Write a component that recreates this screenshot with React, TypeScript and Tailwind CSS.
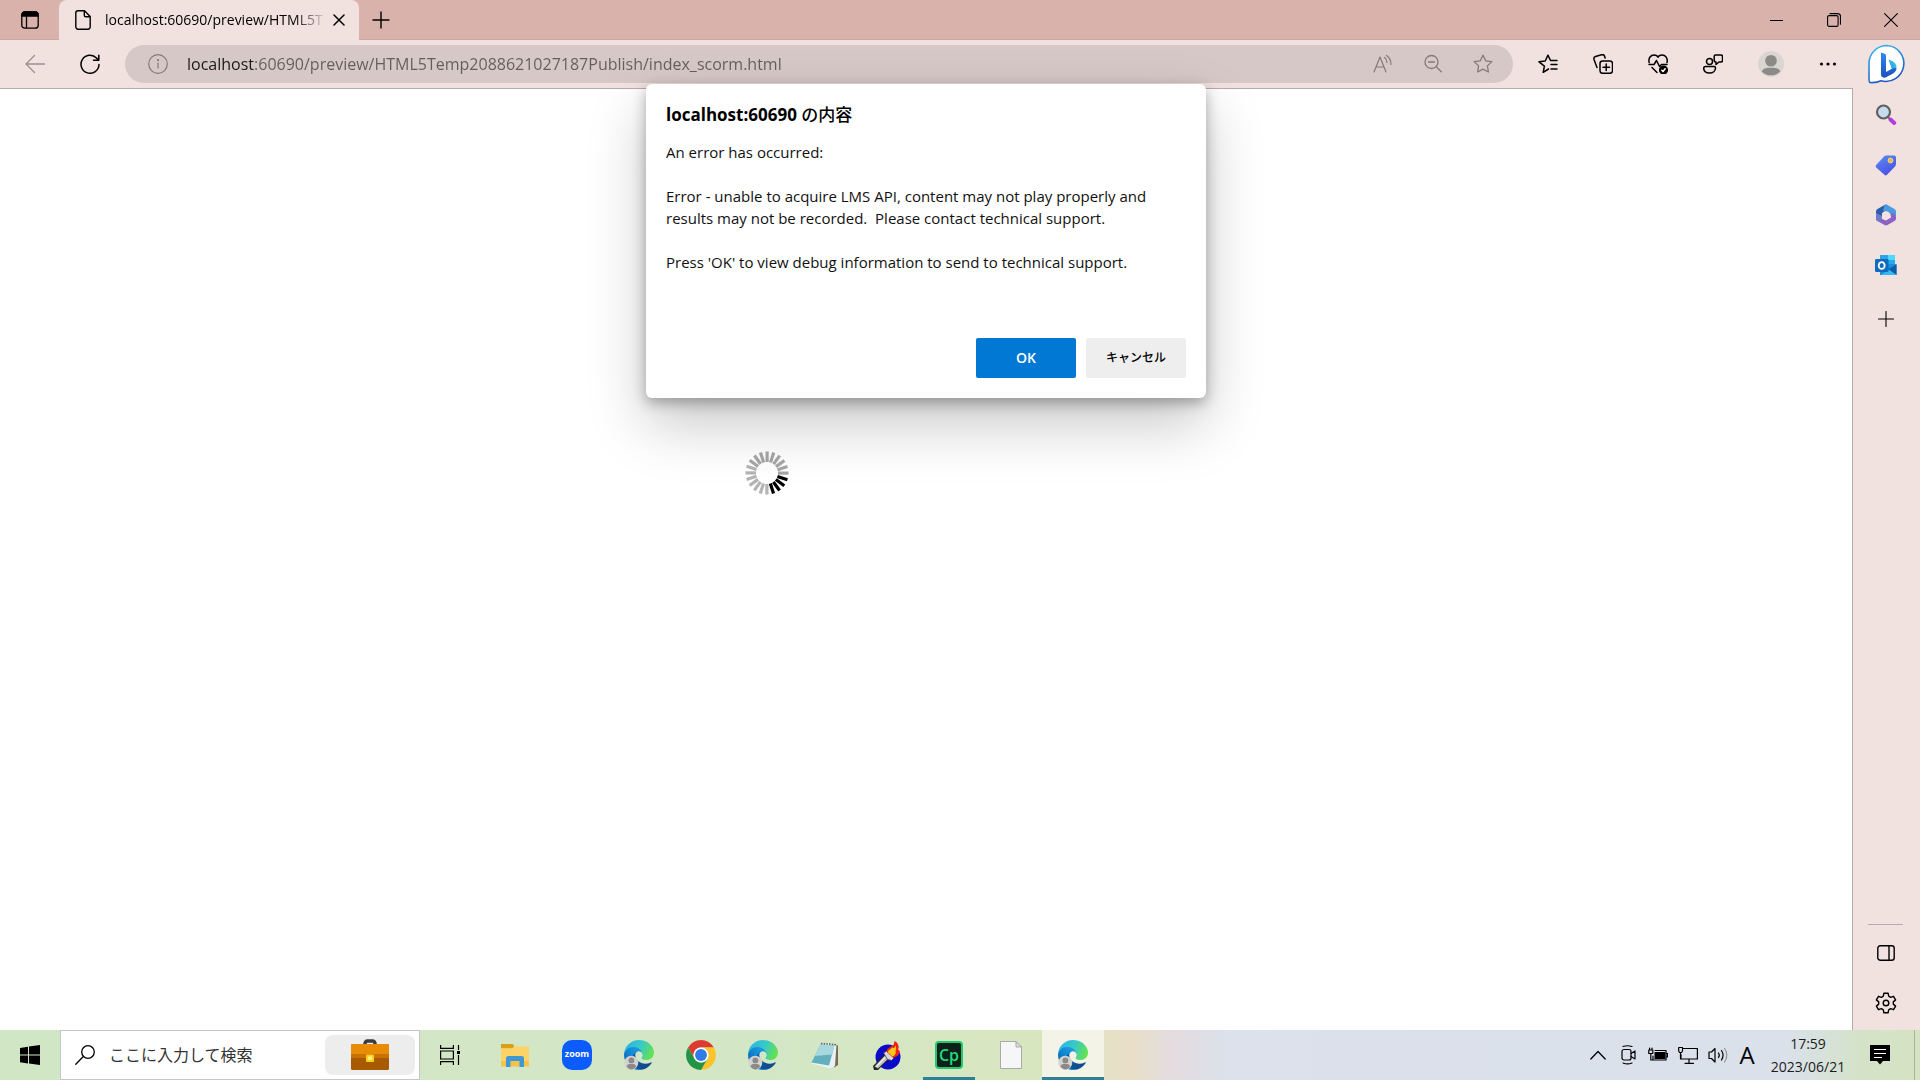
import { useId, type ReactNode } from "react"

type Box = { children: ReactNode; className?: string; box?: string; width?: number }

function Line({ children, className = "size-5", box = "0 0 20 20", width = 1.3 }: Box) {
  return (
    <svg
      viewBox={box}
      fill="none"
      stroke="currentColor"
      strokeWidth={width}
      strokeLinecap="round"
      strokeLinejoin="round"
      className={`shrink-0 ${className}`}
    >
      {children}
    </svg>
  )
}

const STAR = "M10 1.2l2.7 5.6 6.1.8-4.4 4.3 1 6.1-5.4-2.9L4.6 18l1-6.1L1.2 7.6l6.1-.8z"

/* ---------- logos ---------- */

function Bing() {
  const id = useId()
  return (
    <svg viewBox="0 0 38 42" className="h-[42px] w-[38px]">
      <defs>
        <linearGradient id={id + "r"} x1="0" y1="0" x2="0.4" y2="1">
          <stop offset="0" stopColor="#35c0f0" />
          <stop offset="1" stopColor="#2456c4" />
        </linearGradient>
        <linearGradient id={id + "b"} x1="0" y1="0" x2="0" y2="1">
          <stop offset="0" stopColor="#2b8cf0" />
          <stop offset="1" stopColor="#1c4fc0" />
        </linearGradient>
        <linearGradient id={id + "c"} x1="0" y1="1" x2="1" y2="0">
          <stop offset="0" stopColor="#1d5fd0" />
          <stop offset="1" stopColor="#3ddcf2" />
        </linearGradient>
      </defs>
      <path
        d="M19 2.5a18 18 0 1 1-6 35.3c-3 1.5-7 2-11.2 1.7C1 39 1 37 1 34V20.5a18 18 0 0 1 18-18z"
        fill="#fff"
        stroke={`url(#${id}r)`}
        strokeWidth="1.6"
      />
      <path d="M20.5 16.5c4 1.5 8 3 8 7.5 0 3-1.5 5-3.5 6.2L18 33l6-6.5z" fill={`url(#${id}c)`} />
      <path d="M13 9.5l3.5 1.2c1.100.4 1.500 1 1.500 2.200V29l6.500-3.500c2-1 3.800-.5 4 .5-.5 2-2 3.500-3.500 4.400l-6.500 3.700c-1.500.8-3 .7-4.200 0-1-.7-1.300-1.500-1.300-3z" fill={`url(#${id}b)`} />
    </svg>
  )
}

function Edge() {
  const id = useId()
  return (
    <svg viewBox="0 0 256 256" className="size-[30px]">
      <defs>
        <linearGradient id={id + "a"} x1="0.2" y1="0" x2="1" y2="0.3">
          <stop offset="0" stopColor="#0c59a4" />
          <stop offset="1" stopColor="#114a8b" />
        </linearGradient>
        <linearGradient id={id + "b"} x1="1" y1="0.3" x2="0.2" y2="1">
          <stop offset="0" stopColor="#1b9de2" />
          <stop offset="0.5" stopColor="#1288d4" />
          <stop offset="1" stopColor="#0a5ea8" />
        </linearGradient>
        <linearGradient id={id + "c"} x1="0" y1="0.3" x2="1" y2="0.6">
          <stop offset="0" stopColor="#2ab4e4" />
          <stop offset="0.5" stopColor="#38c9c8" />
          <stop offset="1" stopColor="#66e34a" />
        </linearGradient>
      </defs>
      <path fill={`url(#${id}a)`} d="M231 190.500c-3.400 1.800-6.900 3.400-10.500 4.700a101.700 101.700 0 01-35.900 6.500c-47.300 0-88.500-32.500-88.500-74.300 0-11.400 6.200-21.900 16.300-27.300-42.800 1.800-53.800 46.400-53.800 72.500 0 74 68.100 81.400 82.800 81.400 7.900 0 19.800-2.300 27-4.600l1.300-.4a128.300 128.300 0 0066.600-52.800 4 4 0 00-5.300-5.700z" />
      <path fill={`url(#${id}b)`} d="M105.700 241.400a79.200 79.200 0 01-22.700-21.300 80.700 80.700 0 0129.500-120c3.200-1.500 8.500-4.100 15.600-4a32.400 32.400 0 0125.700 13 31.900 31.900 0 016.300 18.700c0-.2 24.500-79.600-80-79.600-43.900 0-80 41.600-80 78.200a130.200 130.200 0 0012.100 56 128 128 0 00156.400 67 75.500 75.500 0 01-62.800-8z" />
      <path fill={`url(#${id}c)`} d="M152.300 148.900c-.8 1-3.300 2.500-3.300 5.700 0 2.600 1.700 5.100 4.700 7.200 14.400 10 41.500 8.700 41.600 8.700 10.700 0 21.100-3 30.300-8.400a61.400 61.400 0 0030.400-52.900c.3-22.400-8-37.300-11.300-43.900C223.500 23.900 177.700 0 128 0A128 128 0 000 126.200c.5-36.500 36.800-66 80-66 3.500 0 23.500.3 42 10a72.600 72.600 0 0130.900 29.300c6.100 10.600 7.200 24.100 7.200 29.500 0 5.400-2.700 13.300-7.800 19.900z" />
      <circle cx="62" cy="194" r="60" fill="#d3d3d1" />
      <circle cx="63" cy="174" r="25" fill="#8c8a88" />
      <path fill="#8c8a88" d="M22 224c6-20 20-20 41-20s34 0 40 20c-8 18-24 27-40 27s-33-9-41-27z" />
    </svg>
  )
}

function Chrome() {
  return (
    <svg viewBox="0 0 48 48" className="size-[30px]">
      <path fill="#de3b30" d="M24 12h20.780a24 24 0 0 0-41.560 0L13.600 30A12 12 0 0 1 24 12z" />
      <path fill="#fcc42c" d="M34.390 30L24 48a24 24 0 0 0 20.780-36H24a12 12 0 0 1 10.390 18z" />
      <path fill="#239446" d="M13.610 30L3.220 12A24 24 0 0 0 24 48l10.390-18a12 12 0 0 1-20.780 0z" />
      <circle cx="24" cy="24" r="12" fill="#fff" />
      <circle cx="24" cy="24" r="9.500" fill="#2f7ce8" />
    </svg>
  )
}

function Folder() {
  return (
    <svg viewBox="0 0 28 28" className="size-7">
      <path fill="#d9a013" d="M0 3h11.500l2 2-2 2.500H0z" />
      <path fill="#fbd367" d="M0 7.500h12l2-2h14V25H0z" />
      <path fill="#f6c34a" d="M0 20h28v5.500H0z" />
      <path fill="#3f97d6" d="M7.500 15h13a2.500 2.500 0 0 1 2.500 2.500V26h-4.500v-6h-9v6H5v-8.500A2.500 2.500 0 0 1 7.500 15z" />
    </svg>
  )
}

function Zoom() {
  return (
    <span className="flex size-[30px] items-center justify-center rounded-[10px] bg-[#0b5cff] pb-0.5 text-[9px] font-bold text-white">
      zoom
    </span>
  )
}

function Notepad() {
  return (
    <svg viewBox="0 0 30 30" className="size-[30px]">
      <path fill="#7b6a50" d="M24 4l4 1.500V25l-4 2.500z" />
      <path fill="#e8f1f4" d="M11 3.500l15.500 1.200L25 26l-5 2.500L1.500 23.500z" />
      <path fill="#62b0bd" d="M10.500 4.500L24.500 5.500l-5.500 20L1.500 22.500z" />
      <path fill="#a6d8de" d="M10.500 4.500L24.500 5.500l-2.500 9L5 16z" />
      <path stroke="#5d6668" strokeWidth="1.600" strokeDasharray="1.500 1.200" d="M11 3.500l15 1.200" />
    </svg>
  )
}

function Torch() {
  return (
    <svg viewBox="0 0 30 30" className="size-[30px]">
      <circle cx="16" cy="17" r="12.500" fill="#0a0ac8" />
      <path fill="#222" d="M1 26L14 13l5 4L6 30H2z" />
      <path fill="#bdbdbd" d="M2.500 26.500L14.500 14l3.500 3L6 28.500z" />
      <path fill="#efefef" d="M4 26l10-10.500 1 1L5 27z" />
      <path fill="#d8d8d8" stroke="#333" strokeWidth=".8" d="M11.500 13l3-2 7.500 7-2.500 2.500-4-1z" />
      <path fill="#f02010" d="M15 12c-1-4 3-4 4-6 2 1 3-1 3.500-5 4 2 5 6 3.500 9 2 0 2 2 1 4s-4 3.500-6 3.500z" />
      <path fill="#ffc61a" d="M16 12.500c0-3 3-3 4-5 2 1 3 0 3.500-2 1.500 4 0 5 0 6.500 1 0 0 3-3 4.500z" />
    </svg>
  )
}

function Captivate() {
  return (
    <span className="flex size-7 items-center justify-center rounded-sm border-2 border-[#1fc96f] bg-[#0d2019] text-base font-semibold text-[#1fdc79]">
      Cp
    </span>
  )
}

function BlankFile() {
  return (
    <svg viewBox="0 0 22 28" className="h-7 w-[22px]" stroke="#a3a3a3" strokeWidth=".9">
      <path fill="#f6f6f8" d="M.5.5H16L21.500 6v21.500H.5z" />
      <path fill="#dedee0" d="M16 .5V6h5.500z" />
    </svg>
  )
}

function Briefcase() {
  return (
    <svg viewBox="0 0 38 32" className="h-8 w-[38px]">
      <path fill="none" stroke="#3b3b3f" strokeWidth="3.500" d="M14 7V4.500A2.500 2.500 0 0 1 16.500 2h5A2.500 2.500 0 0 1 24 4.500V7" />
      <rect y="5" width="38" height="26" rx="1.500" fill="#a85a00" />
      <path fill="#e88b06" d="M1.500 5h35A1.500 1.500 0 0 1 38 6.500V19H0V6.500A1.500 1.500 0 0 1 1.500 5z" />
      <path fill="#c97200" d="M0 15h38v4H0z" />
      <rect x="15" y="15.500" width="8" height="7.500" rx="1" fill="#f6d21c" />
      <rect x="17" y="17.500" width="4" height="3.500" fill="#fff07a" />
    </svg>
  )
}

/* ---------- browser ---------- */

function TabStrip() {
  return (
    <header className="flex h-10 items-stretch bg-[#d9b2ac] shadow-[inset_0_-1px_0_#cfa7a2]">
      <button aria-label="Tab actions" className="flex w-[59px] items-center justify-center">
        <svg viewBox="0 0 18 18" className="size-[18px]" fill="none" stroke="#000" strokeWidth="1.300">
          <rect x=".8" y=".8" width="16.400" height="16.400" rx="3" />
          <path fill="#000" d="M1 5V3.500A2.500 2.500 0 0 1 3.500 1h11A2.500 2.500 0 0 1 17 3.500V5z" />
          <path d="M5.500 5v12" />
        </svg>
      </button>
      <div className="flex w-[300px] items-center rounded-t-lg bg-[#f1e2e0] pl-4">
        <svg viewBox="0 0 16 20" className="h-5 w-4" fill="none" stroke="#000" strokeWidth="1.400" strokeLinejoin="round">
          <path d="M3 .8h6.500l5.700 5.700V17a2.200 2.200 0 0 1-2.200 2.200H3A2.200 2.200 0 0 1 .8 17V3A2.200 2.200 0 0 1 3 .8z" />
          <path d="M9.300 1v4.200c0 .9.600 1.500 1.500 1.500H15" />
        </svg>
        <span className="ml-3.5 w-[222px] text-sm whitespace-nowrap text-black [mask-image:linear-gradient(90deg,#000_85%,transparent)]">
          localhost:60690/preview/HTML5T
        </span>
        <button aria-label="Close tab" className="ml-1.5">
          <Line className="size-3" box="0 0 12 12" width={1.5}>
            <path d="M1 1l10 10M11 1L1 11" />
          </Line>
        </button>
      </div>
      <button aria-label="New tab" className="flex w-11 items-center justify-center">
        <Line className="size-[18px]" box="0 0 18 18" width={1.4}>
          <path d="M9 1v16M1 9h16" />
        </Line>
      </button>
      <div className="ml-auto flex pr-px">
        <button aria-label="Minimize" className="flex w-[57px] items-center justify-center">
          <span className="h-px w-[13px] bg-black" />
        </button>
        <button aria-label="Restore" className="flex w-[57px] items-center justify-center">
          <Line className="size-3.5" box="0 0 14 14" width={1.1}>
            <rect x=".6" y="2.600" width="10.500" height="10.800" rx="1.500" />
            <path d="M3 .6h7.500a3 3 0 0 1 3 3v7.500" />
          </Line>
        </button>
        <button aria-label="Close" className="flex w-[57px] items-center justify-center">
          <Line className="size-3.5" box="0 0 14 14" width={1.1}>
            <path d="M.6.6l12.800 12.800M13.400.6L.6 13.400" />
          </Line>
        </button>
      </div>
    </header>
  )
}

function AddressBar() {
  return (
    <div className="flex h-[38px] flex-1 items-center rounded-full bg-[#d5c8c7] pr-5 pl-[23px] text-[#85797a]">
      <button aria-label="Site information">
        <Line width={1.2}>
          <circle cx="10" cy="10" r="9.300" />
          <path d="M10 9v5" />
          <circle cx="10" cy="6.200" r=".5" fill="currentColor" />
        </Line>
      </button>
      <input
        aria-label="Address"
        defaultValue="localhost:60690/preview/HTML5Temp2088621027187Publish/index_scorm.html"
        className="ml-[19px] min-w-0 flex-1 bg-[linear-gradient(90deg,#1a1818_68px,#645d5d_68px)] bg-clip-text text-base text-transparent outline-none"
      />
      <div className="flex gap-[30px]">
        <button aria-label="Read aloud">
          <Line width={1.2}>
            <path d="M1 18L7 3l6 15M3 13h8M11.500 3.500c1.500 1 2.500 3 2.500 5M13.500 1.500c2.500 1.500 4.500 5 4.500 9" />
          </Line>
        </button>
        <button aria-label="Zoom out">
          <Line>
            <circle cx="8.500" cy="8" r="6.500" />
            <path d="M13.300 12.800l5 5M5.500 8h6" />
          </Line>
        </button>
        <button aria-label="Add to favorites">
          <Line>
            <path d={STAR} />
          </Line>
        </button>
      </div>
    </div>
  )
}

function Toolbar() {
  return (
    <div className="flex h-12 items-center bg-[#f1e2e0] pl-[25px]">
      <button aria-label="Back" className="text-[#9c9090]">
        <Line>
          <path d="M19.500 10H1M9.500 1.500L1 10l8.500 8.500" />
        </Line>
      </button>
      <button aria-label="Refresh" className="mr-[25px] ml-[35px]">
        <Line width={1.5}>
          <path d="M19 10.500A9 9 0 1 1 16.500 4L18.500 6M18.800 1.200V6.200H13.500" />
        </Line>
      </button>
      <AddressBar />
      <div className="flex items-center gap-[35px] pr-[15px] pl-[25px]">
        <button aria-label="Favorites">
          <Line width={1.5}>
            <path d="M10.500 15l-5.300 3.300 1.200-6.200L1 7.800l6.200-.8L10 1.200 12.500 6.500H19M13 10.500h6M13 15h6" />
          </Line>
        </button>
        <button aria-label="Collections">
          <Line width={1.5}>
            <rect x="7" y="7" width="12.500" height="12.300" rx="2.500" />
            <path d="M13.200 10v6.500M10 13.200h6.500M4 13.500L1 5.500C.6 4 1.200 3 2.500 2.500L8.500.8c1.500-.4 2.500 0 3 1.200l.6 2" />
          </Line>
        </button>
        <button aria-label="Browser essentials">
          <Line width={1.5}>
            <path d="M1.200 8.500C0 4 3 1 6 1c2 0 3.500 1 4 2.200C10.500 2 12 1 14 1c3.500 0 6 3 5 7.500M1 10.500h5l2.500-4 3 6 2-2H19M4 13.500l5 5" />
            <circle cx="15.500" cy="16" r="3.800" fill="currentColor" />
            <path stroke="#fff" d="M13.800 16.200l1.200 1.200 2.200-2.600" />
          </Line>
        </button>
        <button aria-label="Feedback">
          <Line width={1.5}>
            <circle cx="6.500" cy="7.500" r="3" />
            <path d="M2.500 12.500h8.500c1 0 1.500.6 1.500 1.500 0 3-2.500 5-6 5s-5.800-2-5.800-5c0-.9.8-1.500 1.800-1.500zM12.500 1h5.500c1 0 1.500.6 1.500 1.500v4c0 1-.5 1.500-1.500 1.500h-2l-3 2.500V8c-1.200 0-1.800-.5-1.800-1.500v-4c0-.9.4-1.500 1.300-1.500z" />
          </Line>
        </button>
        <button aria-label="Profile">
          <svg viewBox="0 0 28 28" className="size-[26px]">
            <circle cx="14" cy="14" r="14" fill="#d9d6d2" />
            <circle cx="14" cy="10.500" r="6.300" fill="#8b8a86" />
            <path fill="#8b8a86" d="M4 22c2-4 5.500-4 10-4s8 0 10 4a14 14 0 0 1-20 0z" />
          </svg>
        </button>
        <button aria-label="Settings and more">
          <svg viewBox="0 0 18 20" className="h-5 w-[18px]">
            <circle cx="2.500" cy="10" r="1.600" />
            <circle cx="9" cy="10" r="1.600" />
            <circle cx="15.500" cy="10" r="1.600" />
          </svg>
        </button>
      </div>
    </div>
  )
}

function Spinner() {
  return (
    <svg viewBox="0 0 44 44" className="size-11">
      {Array.from({ length: 20 }, (_, i) => (
        <rect
          key={i}
          x="33"
          y="20.500"
          width="10.500"
          height="3.200"
          fill={i >= 1 && i <= 4 ? "#000" : i > 4 && i < 12 ? "#b4b4b4" : "#a6a6a6"}
          transform={`rotate(${i * 18} 22 22)`}
        />
      ))}
    </svg>
  )
}

function AlertDialog() {
  return (
    <div
      role="dialog"
      aria-labelledby="alert-title"
      className="absolute -top-[5px] left-1/2 flex w-[560px] -translate-x-1/2 flex-col rounded-md bg-white px-5 pt-[19px] pb-5 shadow-[0_26px_58px_rgba(0,0,0,0.22),0_5px_14px_rgba(0,0,0,0.3)]"
    >
      <h1 id="alert-title" className="text-[17px] leading-6 font-bold text-black">
        localhost:60690 <span className="font-medium">の内容</span>
      </h1>
      <p className="mt-3.5 text-[15px] leading-[22px] whitespace-pre-line text-[#111]">
        {"An error has occurred:\n\nError - unable to acquire LMS API, content may not play properly and\nresults may not be recorded.\u00a0 Please contact technical support.\n\nPress 'OK' to view debug information to send to technical support."}
      </p>
      <div className="mt-[65px] flex justify-end gap-2.5">
        <button className="h-10 w-[100px] rounded-xs bg-[#0078d4] text-sm font-semibold text-white">OK</button>
        <button className="h-10 w-[100px] rounded-xs bg-[#eeeeee] text-xs font-medium text-black">キャンセル</button>
      </div>
    </div>
  )
}

function Sidebar() {
  const id = useId()
  return (
    <aside className="flex w-[68px] flex-col items-center bg-[#f1e2e0]">
      <button aria-label="Bing chat" className="flex h-12 shrink-0 items-center justify-center pl-0.5">
        <Bing />
      </button>
      <div className="flex w-full flex-1 flex-col items-center border-l border-[#b5abaa] pt-0.5 pr-0.5">
        <button aria-label="Search" className="flex h-[50px] items-center">
          <svg viewBox="0 0 22 22" className="size-[22px]">
            <path stroke="#b53be0" strokeWidth="4" strokeLinecap="round" d="M15.500 15.500l3.700 3.500" />
            <path stroke="#777" strokeWidth="2" d="M12.500 12.500l2 2" />
            <circle cx="8.500" cy="8" r="6.500" fill="#c6dcec" stroke="#62605e" strokeWidth="2.200" />
          </svg>
        </button>
        <button aria-label="Shopping" className="flex h-[50px] items-center">
          <svg viewBox="0 0 22 22" className="size-[22px]">
            <defs>
              <linearGradient id={id + "t"} x1="0" y1="0" x2="0.6" y2="1">
                <stop offset="0" stopColor="#5b8ff5" />
                <stop offset="1" stopColor="#4a50e2" />
              </linearGradient>
            </defs>
            <path fill={`url(#${id}t)`} d="M11 1.500h8a2 2 0 0 1 2 2V10c0 1-.3 1.800-1 2.500l-8 8.300c-.8.8-1.800.8-2.600 0l-8-7c-1-.9-1-2 0-3L9 2.500c.5-.6 1.200-1 2-1z" />
            <circle cx="15.500" cy="6.500" r="2.400" fill="#e8b84a" stroke="#f7dd78" />
          </svg>
        </button>
        <button aria-label="Microsoft 365" className="flex h-[50px] items-center">
          <svg viewBox="0 0 22 22" className="size-[22px]">
            <path fill="#2b5fae" d="M9.500 1L2.500 5A3 3 0 0 0 1 7.500v8c2 3 5 2 6 1V9l7.500-4L12.500 1a3 3 0 0 0-3 0z" />
            <path fill="#4a9be0" d="M12.500 1l7 4A3 3 0 0 1 21 7.500V15l-5.500-3.500V10L8 6.500 9.500 1c1-.5 2-.5 3 0z" />
            <path fill="#8e62c4" d="M21 14.500a3 3 0 0 1-1.500 2.500l-7 4a3 3 0 0 1-3 0L2 16.800c2 .6 4 .2 5-1.800l4 1.500 5-3V9c3 0 5 2 5 5.500z" />
            <path fill="#6e7cd0" d="M1 9l6 3v3c-1 2-3 2.500-5 1.800-.7-.5-1-1.300-1-2z" />
            <circle cx="11" cy="11" r="3.800" fill="#f1e2e0" />
          </svg>
        </button>
        <button aria-label="Outlook" className="flex h-[50px] items-center">
          <svg viewBox="0 0 22 22" className="size-[22px]">
            <path fill="#28a8ea" d="M5 1h15v10H5z" />
            <path fill="#50d9ff" d="M13 1h7v5h-7z" />
            <path fill="#1490df" d="M5 10h16.500v11H5z" />
            <path fill="#0f5ba6" d="M21.500 10.500V21l-9-5.500z" />
            <path fill="#35b8f1" d="M21.500 21H6l8-5.500z" />
            <rect y="5" width="13.500" height="13" rx="1.200" fill="#0f6cbd" />
            <ellipse cx="6.700" cy="11.500" rx="3" ry="3.400" fill="none" stroke="#fff" strokeWidth="1.800" />
          </svg>
        </button>
        <button aria-label="Customize sidebar" className="flex h-[58px] items-center">
          <Line className="size-4" box="0 0 16 16" width={1.1}>
            <path d="M8 .5v15M.5 8h15" />
          </Line>
        </button>
        <div className="mt-auto flex flex-col items-center pb-0.5">
          <span className="h-px w-[35px] bg-[#b5abaa]" />
          <button aria-label="Hide sidebar" className="mt-[3px] flex h-[50px] items-center">
            <Line className="h-4 w-[18px]" box="0 0 18 16" width={1.4}>
              <rect x=".8" y=".8" width="16.400" height="14.400" rx="2.500" />
              <path d="M12 1v14" />
            </Line>
          </button>
          <button aria-label="Settings" className="flex h-[50px] items-center">
            <Line className="size-[22px]" box="0 0 22 22" width={1.4}>
              <circle cx="11" cy="11" r="2.800" />
              <path d="M8.900 1.200h4.200l.6 3 1.900 1.100 2.900-1 2.100 3.600-2.300 2v2.200l2.300 2-2.100 3.600-2.900-1-1.900 1.100-.6 3H8.900l-.6-3-1.900-1.100-2.900 1-2.100-3.600 2.300-2V9.900l-2.300-2 2.100-3.600 2.900 1 1.900-1.100z" />
            </Line>
          </button>
        </div>
      </div>
    </aside>
  )
}

/* ---------- taskbar ---------- */

const apps = [
  { name: "File Explorer", icon: <Folder /> },
  { name: "Zoom", icon: <Zoom /> },
  { name: "Microsoft Edge profile 1", icon: <Edge /> },
  { name: "Google Chrome", icon: <Chrome /> },
  { name: "Microsoft Edge profile 2", icon: <Edge /> },
  { name: "Notepad", icon: <Notepad /> },
  { name: "Torch", icon: <Torch /> },
  { name: "Adobe Captivate", icon: <Captivate />, state: "running" },
  { name: "File", icon: <BlankFile /> },
  { name: "Microsoft Edge", icon: <Edge />, state: "active" },
]

function Taskbar() {
  return (
    <footer className="flex h-[50px] items-stretch bg-[linear-gradient(90deg,#d1e6c5_0%,#d3e7c6_40%,#d8e6bf_55%,#eadfc9_59%,#e3dcdf_61%,#dce1ec_64%,#dae1eb_93%,#d4e2c8_97%,#d5e3c3_100%)]">
      <button aria-label="Start" className="flex w-[60px] items-center justify-center">
        <svg viewBox="0 0 20 20" className="size-5">
          <path d="M0 2.900l8-1.200v7.800H0zM9 1.500L20 0v9.500H9zM0 10.500h8v7.900l-8-1.200zM9 10.500h11V20L9 18.500z" />
        </svg>
      </button>
      <div className="flex w-[360px] items-center border border-[#c6c6c6] bg-white pr-1 pl-3.5">
        <Line width={1.3}>
          <circle cx="13" cy="7" r="6.300" />
          <path d="M8.300 11.500L.8 19.200" />
        </Line>
        <input
          aria-label="検索"
          placeholder="ここに入力して検索"
          className="ml-3.5 min-w-0 flex-1 text-base outline-none placeholder:text-[#333]"
        />
        <button aria-label="Search highlights" className="flex h-10 w-[90px] items-center justify-center rounded-lg bg-[#ededed]">
          <Briefcase />
        </button>
      </div>
      <button aria-label="Task view" className="mr-1 flex w-[60px] items-center justify-center">
        <svg viewBox="0 0 20 20" className="size-5" fill="none" stroke="#000" strokeWidth="1.200">
          <path d="M.6 0v3.400h12.800V0M.6 20v-3.400h12.800V20M.6 6h12.800v8H.6zM18.500 0v5M18.500 10v10" />
          <path fill="#000" stroke="none" d="M17 6h3v3h-3z" />
        </svg>
      </button>
      {apps.map((app) => (
        <button
          key={app.name}
          aria-label={app.name}
          className={`relative flex w-[62px] items-center justify-center ${app.state === "active" ? "bg-[#f3f3e8]" : ""}`}
        >
          {app.icon}
          {app.state && (
            <span
              className={`absolute bottom-0 h-[3px] bg-[#2f7f97] ${app.state === "active" ? "inset-x-0" : "inset-x-[5px]"}`}
            />
          )}
        </button>
      ))}
      <div className="ml-auto flex items-center gap-2.5">
        <button aria-label="Show hidden icons" className="mr-0.5">
          <Line className="h-5 w-4" box="0 0 16 20" width={1.3}>
            <path d="M.8 14L8 6.500l7.200 7.500" />
          </Line>
        </button>
        <button aria-label="Meet now">
          <Line width={1.2}>
            <rect x="4" y="4.500" width="9" height="10.500" rx="2" />
            <path d="M13 8.500l4-2.500v8l-4-2.500M5 1.500C8 .5 11 .5 14 1.500M5 18c3 1.200 6 1.200 9 0" />
          </Line>
        </button>
        <button aria-label="Battery">
          <Line width={1.2}>
            <path d="M.8 5h4v3.500h-4zM1.600 3v2M4 3v2M2.800 8.500v6.500H5M7 5.500h11V15H5v-4M18.500 8.500h1v3.500h-1" />
            <path fill="currentColor" stroke="none" d="M6.500 7h10.800v7H6.500z" />
          </Line>
        </button>
        <button aria-label="Network">
          <Line width={1.2}>
            <path d="M5 3.500h14.400v10.500H3V9.500M11 14v4M7 18.300h8.500M.7 2.500h3.800v3.500L3.500 7.500h-2L.7 6zM2.500 7.500V14" />
          </Line>
        </button>
        <button aria-label="Volume">
          <Line width={1.2}>
            <path d="M1 7v6.500h2.500L7 17V3.500L3.500 7zM10.500 8c1 1.300 1 3 0 4.500M13.500 5.500c2 3 2 6.500 0 9.500" />
            <path stroke="#8f959c" d="M16.500 3.500c3 4 3 9.500 0 13.500" />
          </Line>
        </button>
        <button aria-label="Input mode" className="w-[18px] text-center text-2xl leading-6 text-black">
          A
        </button>
        <button className="w-[84px] text-center text-sm leading-[23px] text-[#1c1c1c]">
          <time dateTime="2023-06-21T17:59">
            17:59
            <br />
            2023/06/21
          </time>
        </button>
        <button aria-label="Notifications" className="mr-6 ml-2.5">
          <svg viewBox="0 0 20 20" className="size-5">
            <path d="M0 0h20v16h-7l-3 3.500L7 16H0z" />
            <path stroke="#fff" strokeWidth="1.100" d="M4 4.500h12M4 8.500h12M4 12.500h8" />
          </svg>
        </button>
      </div>
      <span className="w-1.5 border-l border-[#a7b59c]" />
    </footer>
  )
}

export default function App() {
  return (
    <div className="flex min-h-screen flex-col bg-white font-['Open_Sans','Noto_Sans_CJK_JP',sans-serif] text-black">
      <TabStrip />
      <div className="flex flex-1">
        <div className="flex min-w-0 flex-1 flex-col">
          <Toolbar />
          <main className="relative flex-1 border-t border-[#b5abaa] bg-white">
            <div className="flex w-[83%] justify-center pt-[362px] pr-1">
              <Spinner />
            </div>
            <AlertDialog />
          </main>
        </div>
        <Sidebar />
      </div>
      <Taskbar />
    </div>
  )
}
